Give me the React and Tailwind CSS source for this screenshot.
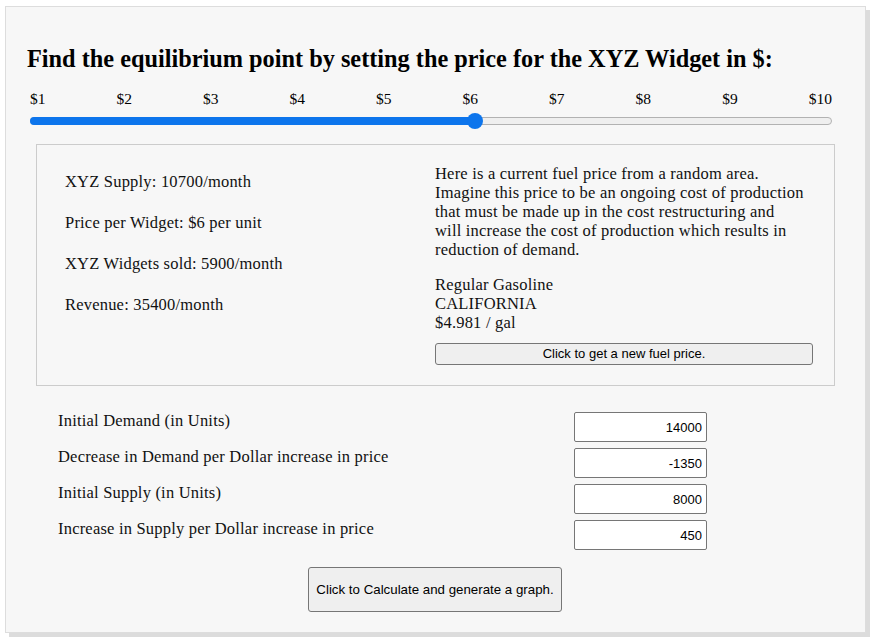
import { useState } from 'react';

const serif = { fontFamily: '"Liberation Serif", "DejaVu Serif", serif' };
const sans = { fontFamily: '"Liberation Sans", Arial, sans-serif' };

export default function App() {
  const [price] = useState(6);
  const pct = ((price - 1) / 9) * 100;

  const fields = [
    { label: 'Initial Demand (in Units)', value: '14000' },
    { label: 'Decrease in Demand per Dollar increase in price', value: '-1350' },
    { label: 'Initial Supply (in Units)', value: '8000' },
    { label: 'Increase in Supply per Dollar increase in price', value: '450' },
  ];

  return (
    <div className="w-[874px] h-[642px] bg-white pt-[6px] pl-[5px]" style={serif}>
      <div className="w-[861px] h-[627px] bg-[#f7f7f7] border border-[#dddddd] shadow-[4px_4px_0_#dcdcdc] text-[#111]">

        {/* Heading */}
        <h1 className="pl-[21px] pt-[37px] text-[24.3px] font-bold leading-[30px] text-black">
          Find the equilibrium point by setting the price for the XYZ Widget in $:
        </h1>

        {/* Slider */}
        <div className="mx-[24px] mt-[16px] w-[802px]">
          <div className="flex justify-between text-[15.5px] leading-[18px] text-black">
            {[1, 2, 3, 4, 5, 6, 7, 8, 9, 10].map((n) => (
              <span key={n}>${n}</span>
            ))}
          </div>
          <div className="relative mt-[9px] h-[8px] rounded-full bg-[#efefef] border border-[#b2b2b2]">
            <div className="h-[8px] -mt-px -ml-px rounded-full bg-[#0d75ec]" style={{ width: `${pct}%` }} />
            <div
              className="absolute top-[-5px] w-[16px] h-[16px] -ml-[8px] rounded-full bg-[#0d75ec]"
              style={{ left: `${pct}%` }}
            />
          </div>
        </div>

        {/* Info box */}
        <div className="mx-[30px] mt-[19px] h-[242px] border border-[#cccccc] grid grid-cols-[370px_378px] pl-[28px] pt-[19px] text-[16.5px] tracking-[0.2px]">
          <div className="flex flex-col gap-[22px] pt-[8px] leading-[19px]">
            <p>XYZ Supply: 10700/month</p>
            <p>Price per Widget: $6 per unit</p>
            <p>XYZ Widgets sold: 5900/month</p>
            <p>Revenue: 35400/month</p>
          </div>
          <div className="leading-[19px]">
            <p className="whitespace-nowrap">
              Here is a current fuel price from a random area.<br />
              Imagine this price to be an ongoing cost of production<br />
              that must be made up in the cost restructuring and<br />
              will increase the cost of production which results in<br />
              reduction of demand.
            </p>
            <p className="mt-[16px]">
              Regular Gasoline<br />
              CALIFORNIA<br />
              $4.981 / gal
            </p>
            <button
              className="mt-[11px] w-[378px] h-[22px] bg-[#efefef] border border-[#767676] rounded-[3px] text-[13px] leading-[18px] tracking-normal text-black"
              style={sans}
            >
              Click to get a new fuel price.
            </button>
          </div>
        </div>

        {/* Inputs */}
        <div className="mt-[26px] pl-[52px] flex flex-col gap-[6px] text-[16.5px] tracking-[0.2px]">
          {fields.map((f) => (
            <div key={f.label} className="flex items-start h-[30px]">
              <label className="w-[516px] leading-[18px]">{f.label}</label>
              <input
                readOnly
                value={f.value}
                className="w-[133px] h-[30px] bg-white border border-[#767676] rounded-[2px] px-[4px] text-right text-[13px] tracking-normal text-black"
                style={sans}
              />
            </div>
          ))}
        </div>

        <div className="flex justify-center mt-[17px] pr-[1px]">
          <button
            className="w-[254px] h-[45px] bg-[#efefef] border border-[#767676] rounded-[3px] text-[13.3px] text-black"
            style={sans}
          >
            Click to Calculate and generate a graph.
          </button>
        </div>
      </div>
    </div>
  );
}
